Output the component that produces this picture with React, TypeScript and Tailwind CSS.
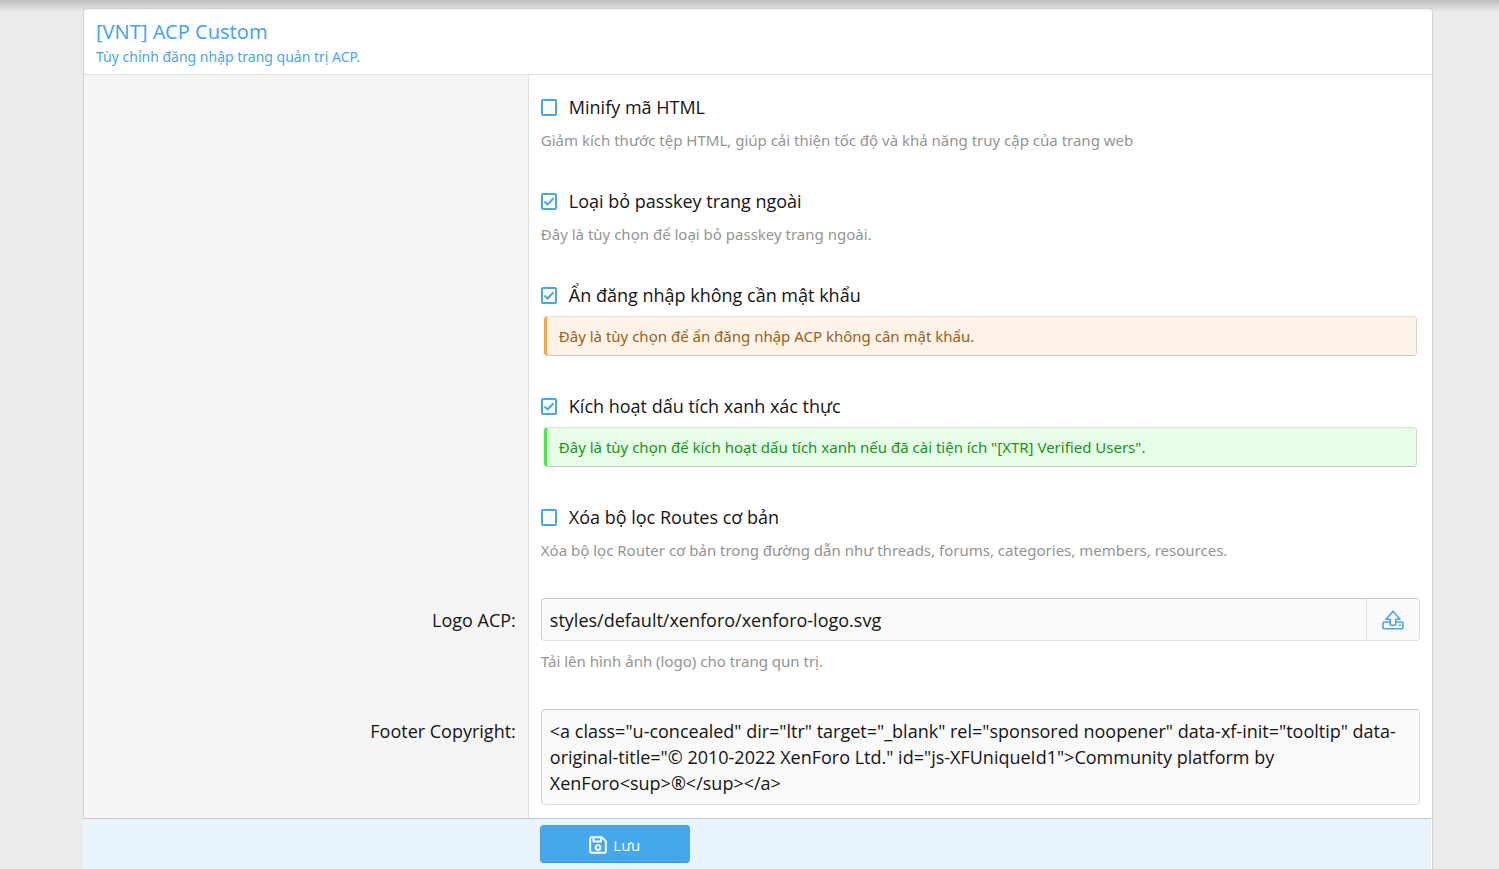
import React, { useState } from "react";

type Note = {
  kind: "hint" | "warning" | "success";
  text: string;
};

type CheckOption = {
  id: string;
  label: string;
  checked: boolean;
  note: Note;
};

const options: CheckOption[] = [
  {
    id: "minify",
    label: "Minify mã HTML",
    checked: false,
    note: { kind: "hint", text: "Giảm kích thước tệp HTML, giúp cải thiện tốc độ và khả năng truy cập của trang web" },
  },
  {
    id: "passkey",
    label: "Loại bỏ passkey trang ngoài",
    checked: true,
    note: { kind: "hint", text: "Đây là tùy chọn để loại bỏ passkey trang ngoài." },
  },
  {
    id: "passwordless",
    label: "Ẩn đăng nhập không cần mật khẩu",
    checked: true,
    note: { kind: "warning", text: "Đây là tùy chọn để ẩn đăng nhập ACP không cân mật khẩu." },
  },
  {
    id: "verified",
    label: "Kích hoạt dấu tích xanh xác thực",
    checked: true,
    note: {
      kind: "success",
      text: 'Đây là tùy chọn để kích hoạt dấu tích xanh nếu đã cài tiện ích "[XTR] Verified Users".',
    },
  },
  {
    id: "routes",
    label: "Xóa bộ lọc Routes cơ bản",
    checked: false,
    note: {
      kind: "hint",
      text: "Xóa bộ lọc Router cơ bản trong đường dẫn như threads, forums, categories, members, resources.",
    },
  },
];

const copyright =
  '<a class="u-concealed" dir="ltr" target="_blank" rel="sponsored noopener" data-xf-init="tooltip" data-original-title="© 2010-2022 XenForo Ltd." id="js-XFUniqueId1">Community platform by XenForo<sup>®</sup></a>';

function FormRow({ label, htmlFor, last, children }: {
  label?: string;
  htmlFor?: string;
  last?: boolean;
  children: React.ReactNode;
}) {
  return (
    <div className="flex">
      <div className="w-[33%] shrink-0 border-r border-[#dfdfdf] bg-[#f5f5f5] px-3 pt-7 text-right">
        {label && <label htmlFor={htmlFor}>{label}</label>}
      </div>
      <div className={`min-w-0 flex-1 px-3 pt-[19px] ${last ? "pb-[13px]" : "pb-[17px]"}`}>{children}</div>
    </div>
  );
}

function Hint({ id, children }: { id: string; children: React.ReactNode }) {
  return (
    <p id={id} className="pt-2 font-['Noto_Sans',sans-serif] text-[15px] leading-6 text-[#949494]">
      {children}
    </p>
  );
}

function OptionNote({ id, note }: { id: string; note: Note }) {
  if (note.kind === "hint") return <Hint id={id}>{note.text}</Hint>;
  return (
    <div className="pt-2 pr-[3px] pb-px pl-[3px]">
      <p
        id={id}
        className={`rounded-sm border border-l-[3px] border-t-[#dfdfdf] border-r-[#d3d3d3] border-b-[#c9c9c9] px-3 py-[7px] font-['Noto_Sans',sans-serif] text-[15px] leading-6 ${
          note.kind === "warning"
            ? "border-l-[#f9a73f] bg-[#fff3e7] text-[#96611a]"
            : "border-l-[#3ff03f] bg-[#e7ffe7] text-[#179417]"
        }`}
      >
        {note.text}
      </p>
    </div>
  );
}

function OptionRow({ option }: { option: CheckOption }) {
  const [checked, setChecked] = useState(option.checked);

  return (
    <FormRow>
      <label htmlFor={option.id} className="flex items-center gap-3">
        <span className="relative flex">
          <input
            id={option.id}
            type="checkbox"
            checked={checked}
            onChange={(e) => setChecked(e.target.checked)}
            aria-describedby={`${option.id}-note`}
            className="peer h-[17px] w-4 appearance-none rounded-[2px] border-2 border-[#47a7eb]"
          />
          <svg
            viewBox="0 0 16 17"
            className="pointer-events-none absolute inset-0 hidden h-[17px] w-4 peer-checked:block"
            fill="none"
            stroke="#47a7eb"
            strokeWidth="2"
          >
            <path d="M3.5 8.6 6.6 11.5 12.5 5.3" />
          </svg>
        </span>
        {option.label}
      </label>
      <OptionNote id={`${option.id}-note`} note={option.note} />
    </FormRow>
  );
}

function UploadIcon() {
  return (
    <svg
      viewBox="0 0 22 20"
      className="h-5 w-[22px]"
      fill="none"
      stroke="#47a7eb"
      strokeWidth="1.6"
      strokeLinejoin="round"
    >
      <path d="M8.2 14.2V9.2H4L11 1.2l7 8h-4.2v5c0 .6-.4 1-1 1H9.2c-.6 0-1-.4-1-1Z" />
      <path d="M8.2 12H2.200C1.500 12 1 12.500 1 13.200v4.300c0 .7.500 1.200 1.200 1.200h17.600c.7 0 1.200-.5 1.200-1.200v-4.300c0-.7-.5-1.200-1.200-1.200H13.800" />
      <path d="M16.800 15.400h2" />
    </svg>
  );
}

function SaveIcon() {
  return (
    <svg
      viewBox="0 0 18 18"
      className="size-[18px]"
      fill="none"
      stroke="currentColor"
      strokeWidth="1.9"
      strokeLinejoin="round"
    >
      <path d="M2.5 1.200h10.300l4 4v10.300c0 .7-.6 1.300-1.300 1.300h-13c-.7 0-1.300-.6-1.300-1.300v-13c0-.7.6-1.300 1.300-1.300Z" />
      <path d="M4.5 1.200v4.300H12V1.200" />
      <circle cx="9" cy="11.500" r="2.400" />
    </svg>
  );
}

export default function App() {
  const [logo, setLogo] = useState("styles/default/xenforo/xenforo-logo.svg");
  const [footer, setFooter] = useState(copyright);

  return (
    <div className="relative min-h-screen bg-[#ebebeb] pt-2 pr-[66px] pl-[83px] font-['Open_Sans',sans-serif] text-[18px] leading-[26px] text-[#141414]">
      <div className="pointer-events-none absolute inset-x-0 top-0 h-3 bg-linear-to-b from-black/20 to-transparent" />
      <form
        onSubmit={(e) => e.preventDefault()}
        className="flex min-h-[calc(100vh-8px)] flex-col rounded-t-sm border border-b-0 border-[#d3d3d3] border-t-[#dfdfdf] bg-white"
      >
        <header className="border-b border-[#dfdfdf] px-3 pt-[9px] pb-1.5 font-['Noto_Sans',sans-serif] text-[#47a7eb]">
          <h2 className="text-[20px] leading-7">[VNT] ACP Custom</h2>
          <p className="text-[14px] leading-[22px]">Tùy chỉnh đăng nhập trang quản trị ACP.</p>
        </header>

        {options.map((option) => (
          <OptionRow key={option.id} option={option} />
        ))}

        <FormRow label="Logo ACP:" htmlFor="logo">
          <div className="flex h-[43px] rounded-sm border border-[#dfdfdf] border-t-[#c9c9c9] border-l-[#d3d3d3] bg-[#fafafa]">
            <input
              id="logo"
              type="text"
              value={logo}
              onChange={(e) => setLogo(e.target.value)}
              aria-describedby="logo-note"
              className="min-w-0 flex-1 px-2 outline-none"
            />
            <button
              type="button"
              aria-label="Tải lên"
              className="flex w-[53px] items-center justify-center border-l border-[#dfdfdf]"
            >
              <UploadIcon />
            </button>
          </div>
          <Hint id="logo-note">Tải lên hình ảnh (logo) cho trang qun trị.</Hint>
        </FormRow>

        <FormRow label="Footer Copyright:" htmlFor="copyright" last>
          <textarea
            id="copyright"
            rows={3}
            value={footer}
            onChange={(e) => setFooter(e.target.value)}
            className="block w-full resize-none overflow-hidden rounded-sm border border-[#dfdfdf] border-t-[#c9c9c9] border-l-[#d3d3d3] bg-[#fafafa] px-2 py-2 outline-none"
          />
        </FormRow>

        <div className="mr-px -ml-px flex flex-1 border-t border-[#c9c9c9] bg-[#e8f3fd] py-1.5">
          <div className="w-[33%] shrink-0" />
          <div className="px-3">
            <button
              type="submit"
              className="flex h-[38px] w-[150px] items-center justify-center gap-1.5 rounded-sm border border-[#47a7eb] border-b-[#2b98e8] bg-[#47a7eb] pt-0.5 text-[15px] font-medium text-white"
            >
              <SaveIcon />
              Lưu
            </button>
          </div>
        </div>
      </form>
    </div>
  );
}
